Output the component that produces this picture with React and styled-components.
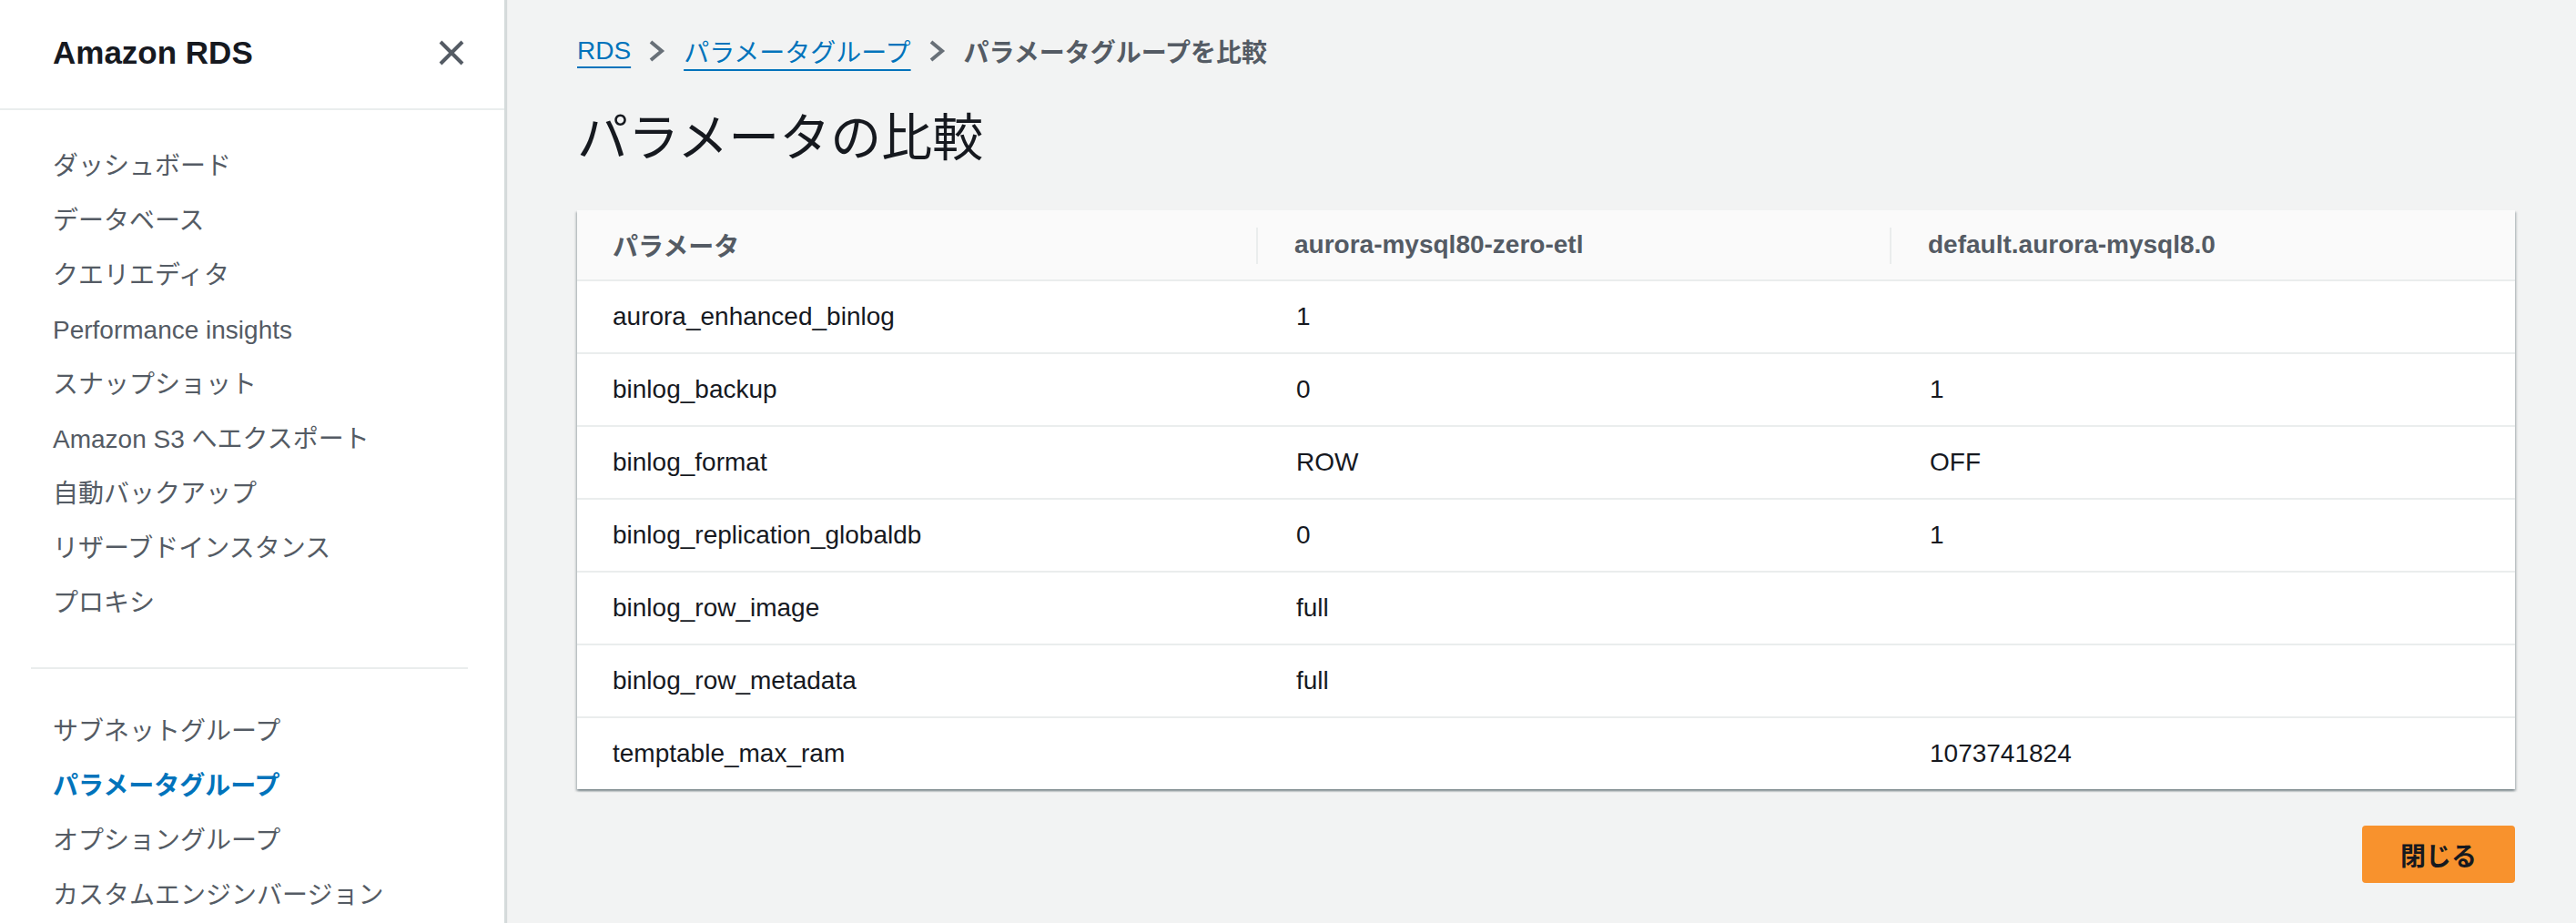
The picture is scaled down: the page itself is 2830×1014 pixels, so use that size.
import React from 'react';
import styled, { createGlobalStyle } from 'styled-components';

const GlobalStyle = createGlobalStyle`
  html, body {
    margin: 0;
    padding: 0;
    background: #f2f3f3;
    font-family: "Liberation Sans", "Noto Sans CJK JP", sans-serif;
    color: #16191f;
  }
  * { box-sizing: border-box; }
`;

const navTop = [
  'ダッシュボード',
  'データベース',
  'クエリエディタ',
  'Performance insights',
  'スナップショット',
  'Amazon S3 へエクスポート',
  '自動バックアップ',
  'リザーブドインスタンス',
  'プロキシ',
];

const navBottom = [
  { label: 'サブネットグループ' },
  { label: 'パラメータグループ', active: true },
  { label: 'オプショングループ' },
  { label: 'カスタムエンジンバージョン' },
];

const rows = [
  ['aurora_enhanced_binlog', '1', ''],
  ['binlog_backup', '0', '1'],
  ['binlog_format', 'ROW', 'OFF'],
  ['binlog_replication_globaldb', '0', '1'],
  ['binlog_row_image', 'full', ''],
  ['binlog_row_metadata', 'full', ''],
  ['temptable_max_ram', '', '1073741824'],
];

const Page = styled.div`
  display: flex;
  height: 100vh;
  overflow: hidden;
`;

const Sidebar = styled.aside`
  width: 556px;
  flex-shrink: 0;
  background: #fff;
  border-right: 2px solid #d5dbdb;
  box-shadow: 1px 0 1px rgba(0, 28, 36, 0.12);
`;

const SideHeader = styled.div`
  height: 121px;
  display: flex;
  align-items: center;
  justify-content: space-between;
  padding: 0 44px 4px 58px;
  border-bottom: 2px solid #eaeded;
`;

const SideTitle = styled.h2`
  margin: 0;
  font-size: 35px;
  font-weight: 700;
  color: #16191f;
`;

const CloseButton = styled.button`
  border: none;
  background: transparent;
  padding: 0;
  width: 28px;
  height: 28px;
  display: flex;
  align-items: center;
  justify-content: center;
  cursor: pointer;
`;

const NavGroup = styled.ul`
  list-style: none;
  margin: 0;
  padding: ${p => (p.$first ? '32px 0 0' : '0')};
`;

const NavItem = styled.li`
  height: 60px;
  line-height: 60px;
  padding-left: 58px;
  font-size: 28px;
  white-space: nowrap;
  color: ${p => (p.$active ? '#0073bb' : '#545b64')};
  font-weight: ${p => (p.$active ? 700 : 400)};
`;

const NavDivider = styled.hr`
  border: none;
  height: 2px;
  background: #eaeded;
  margin: 40px 40px 39px 34px;
`;

const Main = styled.main`
  flex: 1;
  padding: 36px 67px 0 78px;
`;

const Breadcrumbs = styled.nav`
  display: flex;
  align-items: center;
  gap: 19px;
  height: 40px;
  font-size: 28px;
`;

const Crumb = styled.a`
  color: #0073bb;
  text-decoration: underline;
  text-decoration-thickness: 2px;
  text-underline-offset: 8px;
  cursor: pointer;
`;

const CurrentCrumb = styled.span`
  color: #545b64;
  font-weight: 700;
`;

const Title = styled.h1`
  margin: 40px 0 43px;
  font-size: 56px;
  line-height: 72px;
  font-weight: 400;
  color: #16191f;
`;

const Card = styled.div`
  background: #fff;
  box-shadow: 0 2px 2px rgba(0, 28, 36, 0.3), 2px 2px 2px rgba(0, 28, 36, 0.15),
    -2px 2px 2px rgba(0, 28, 36, 0.15);
`;

const Row = styled.div`
  display: grid;
  grid-template-columns: 746px 696px 1fr;
  height: ${p => (p.$head ? '78px' : '80px')};
  background: ${p => (p.$head ? '#fafafa' : '#fff')};
  border-bottom: 2px solid #eaeded;
  &:last-child {
    border-bottom: none;
    height: 78px;
  }
`;

const HeadCell = styled.div`
  display: flex;
  align-items: center;
  padding-left: ${p => (p.$first ? '39px' : '42px')};
  font-size: 28px;
  font-weight: 700;
  color: #545b64;
  position: relative;
  &::before {
    content: '';
    display: ${p => (p.$first ? 'none' : 'block')};
    position: absolute;
    left: 0;
    top: 19px;
    width: 2px;
    height: 40px;
    background: #eaeded;
  }
`;

const Cell = styled.div`
  display: flex;
  align-items: center;
  padding-left: ${p => (p.$first ? '39px' : '44px')};
  font-size: 28px;
  color: #16191f;
`;

const Actions = styled.div`
  display: flex;
  justify-content: flex-end;
  margin-top: 40px;
`;

const PrimaryButton = styled.button`
  width: 168px;
  height: 63px;
  border: none;
  border-radius: 4px;
  background: #f8922d;
  color: #16191f;
  font-family: inherit;
  font-size: 28px;
  font-weight: 700;
  cursor: pointer;
`;

const Chevron = () => (
  <svg width="20" height="24" viewBox="0 0 20 24">
    <polyline points="3,2 15,12 3,22" fill="none" stroke="#687078" strokeWidth="4" />
  </svg>
);

const CloseIcon = () => (
  <svg width="28" height="28" viewBox="0 0 28 28">
    <path d="M2 2 L26 26 M26 2 L2 26" stroke="#545b64" strokeWidth="4" />
  </svg>
);

export default function App() {
  return (
    <>
      <GlobalStyle />
      <Page>
        <Sidebar>
          <SideHeader>
            <SideTitle>Amazon RDS</SideTitle>
            <CloseButton aria-label="close">
              <CloseIcon />
            </CloseButton>
          </SideHeader>
          <NavGroup $first>
            {navTop.map(label => (
              <NavItem key={label}>{label}</NavItem>
            ))}
          </NavGroup>
          <NavDivider />
          <NavGroup>
            {navBottom.map(item => (
              <NavItem key={item.label} $active={item.active}>
                {item.label}
              </NavItem>
            ))}
          </NavGroup>
        </Sidebar>
        <Main>
          <Breadcrumbs>
            <Crumb>RDS</Crumb>
            <Chevron />
            <Crumb>パラメータグループ</Crumb>
            <Chevron />
            <CurrentCrumb>パラメータグループを比較</CurrentCrumb>
          </Breadcrumbs>
          <Title>パラメータの比較</Title>
          <Card>
            <Row $head>
              <HeadCell $first>パラメータ</HeadCell>
              <HeadCell>aurora-mysql80-zero-etl</HeadCell>
              <HeadCell>default.aurora-mysql8.0</HeadCell>
            </Row>
            {rows.map(r => (
              <Row key={r[0]}>
                <Cell $first>{r[0]}</Cell>
                <Cell>{r[1]}</Cell>
                <Cell>{r[2]}</Cell>
              </Row>
            ))}
          </Card>
          <Actions>
            <PrimaryButton>閉じる</PrimaryButton>
          </Actions>
        </Main>
      </Page>
    </>
  );
}
